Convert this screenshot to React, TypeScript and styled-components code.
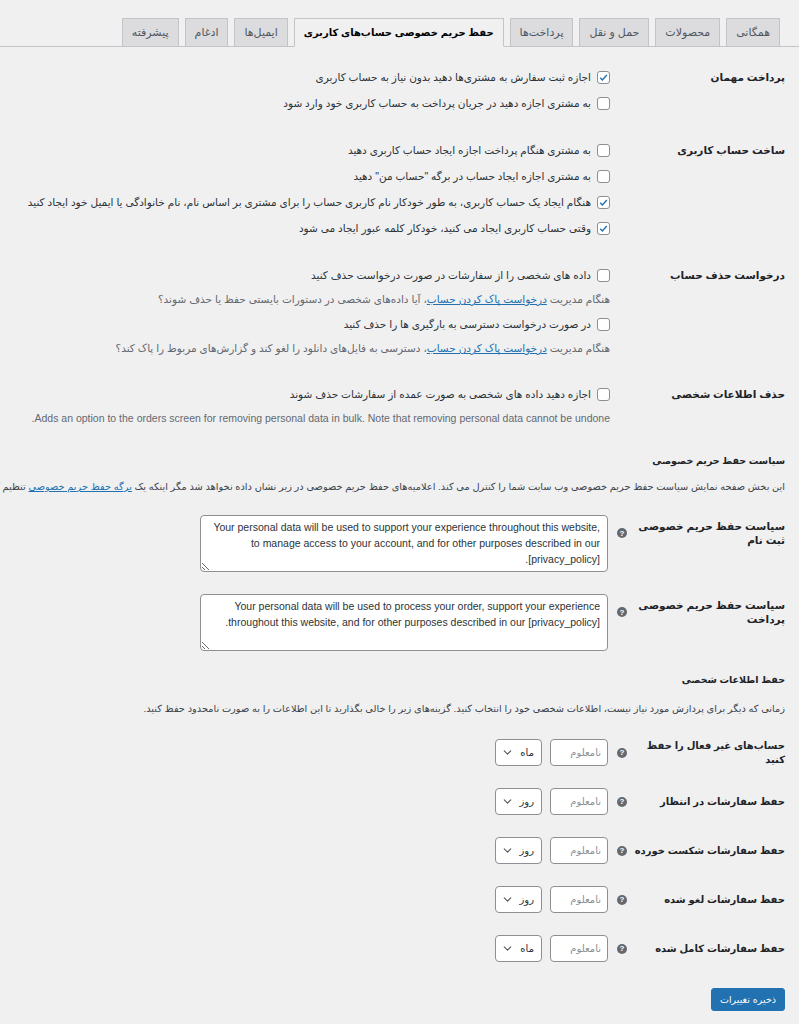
import styled, { createGlobalStyle } from "styled-components";
import { ChevronDown } from "lucide-react";

const GlobalStyle = createGlobalStyle`
  html, body {
    margin: 0;
    background: #f0f0f1;
  }
  body {
    direction: rtl;
    font-family: "Liberation Sans", "DejaVu Sans", sans-serif;
    font-size: 10.5px;
    color: #3c434a;
    overflow-x: hidden;
  }
`;

const tabs = [
  "همگانی",
  "محصولات",
  "حمل و نقل",
  "پرداخت‌ها",
  "حفظ حریم خصوصی حساب‌های کاربری",
  "ایمیل‌ها",
  "ادغام",
  "پیشرفته",
];

const retention = [
  { label: "حساب‌های غیر فعال را حفظ کنید", unit: "ماه" },
  { label: "حفظ سفارشات در انتظار", unit: "روز" },
  { label: "حفظ سفارشات شکست خورده", unit: "روز" },
  { label: "حفظ سفارشات لغو شده", unit: "روز" },
  { label: "حفظ سفارشات کامل شده", unit: "ماه" },
];

const Check = ({ checked, children }: { checked?: boolean; children: React.ReactNode }) => (
  <CheckRow>
    <Box>
      {checked && (
        <svg width="11" height="11" viewBox="0 0 20 20">
          <path d="M4 10.5l4 4 8-9" fill="none" stroke="#2271b1" strokeWidth="2.6" />
        </svg>
      )}
    </Box>
    <span>{children}</span>
  </CheckRow>
);

const HelpTip = () => <Help>?</Help>;

const App = () => {
  return (
    <>
      <GlobalStyle />
      <TabBar>
        {tabs.map((t, i) => (
          <Tab key={t} $active={i === 4}>
            {t}
          </Tab>
        ))}
      </TabBar>
      <Content>
        <Row>
          <Th>پرداخت مهمان</Th>
          <Td>
            <Check checked>اجازه ثبت سفارش به مشتری‌ها دهید بدون نیاز به حساب کاربری</Check>
            <Check>به مشتری اجازه دهید در جریان پرداخت به حساب کاربری خود وارد شود</Check>
          </Td>
        </Row>
        <Row>
          <Th>ساخت حساب کاربری</Th>
          <Td>
            <Check>به مشتری هنگام پرداخت اجازه ایجاد حساب کاربری دهید</Check>
            <Check>به مشتری اجازه ایجاد حساب در برگه "حساب من" دهید</Check>
            <Check checked>
              هنگام ایجاد یک حساب کاربری، به طور خودکار نام کاربری حساب را برای مشتری بر اساس نام، نام خانوادگی یا ایمیل خود ایجاد کنید
            </Check>
            <Check checked>وقتی حساب کاربری ایجاد می کنید، خودکار کلمه عبور ایجاد می شود</Check>
          </Td>
        </Row>
        <Row>
          <Th>درخواست حذف حساب</Th>
          <Td>
            <Check>داده های شخصی را از سفارشات در صورت درخواست حذف کنید</Check>
            <Desc>
              هنگام مدیریت <Link>درخواست پاک کردن حساب</Link>، آیا داده‌های شخصی در دستورات بایستی حفظ یا حذف شوند؟
            </Desc>
            <Check>در صورت درخواست دسترسی به بارگیری ها را حذف کنید</Check>
            <Desc>
              هنگام مدیریت <Link>درخواست پاک کردن حساب</Link>، دسترسی به فایل‌های دانلود را لغو کند و گزارش‌های مربوط را پاک کند؟
            </Desc>
          </Td>
        </Row>
        <Row>
          <Th>حذف اطلاعات شخصی</Th>
          <Td>
            <Check>اجازه دهید داده های شخصی به صورت عمده از سفارشات حذف شوند</Check>
            <Desc>
              Adds an option to the orders screen for removing personal data in bulk. Note that removing personal data cannot be undone.
            </Desc>
          </Td>
        </Row>

        <Heading>سیاست حفظ حریم خصوصی</Heading>
        <Intro $top={9}>
          این بخش صفحه نمایش سیاست حفظ حریم خصوصی وب سایت شما را کنترل می کند. اعلامیه‌های حفظ حریم خصوصی در زیر نشان داده نخواهد شد مگر اینکه یک <Link>برگه حفظ حریم خصوصی</Link> تنظیم کنید.
        </Intro>

        <TextRow>
          <FieldTh>
            <FieldLabel>سیاست حفظ حریم خصوصی ثبت نام</FieldLabel>
            <HelpTip />
          </FieldTh>
          <Td>
            <Area
              readOnly
              value="Your personal data will be used to support your experience throughout this website, to manage access to your account, and for other purposes described in our [privacy_policy]."
            />
          </Td>
        </TextRow>
        <TextRow>
          <FieldTh>
            <FieldLabel>سیاست حفظ حریم خصوصی پرداخت</FieldLabel>
            <HelpTip />
          </FieldTh>
          <Td>
            <Area
              readOnly
              value="Your personal data will be used to process your order, support your experience throughout this website, and for other purposes described in our [privacy_policy]."
            />
          </Td>
        </TextRow>

        <Heading $top={18}>حفظ اطلاعات شخصی</Heading>
        <Intro $top={12}>
          زمانی که دیگر برای پردازش مورد نیاز نیست، اطلاعات شخصی خود را انتخاب کنید. گزینه‌های زیر را خالی بگذارید تا این اطلاعات را به صورت نامحدود حفظ کنید.
        </Intro>

        <Retention>
          {retention.map((r) => (
            <RetentionRow key={r.label}>
              <FieldTh $center>
                <FieldLabel>{r.label}</FieldLabel>
                <HelpTip />
              </FieldTh>
              <Controls>
                <NumberInput placeholder="نامعلوم" />
                <SelectBox>
                  <span>{r.unit}</span>
                  <ChevronDown size={13} strokeWidth={2} color="#50575e" />
                </SelectBox>
              </Controls>
            </RetentionRow>
          ))}
        </Retention>

        <SaveButton>ذخیره تغییرات</SaveButton>
      </Content>
    </>
  );
};

export default App;

const TabBar = styled.nav`
  display: flex;
  gap: 6px;
  padding: 18px 19px 0 0;
  border-bottom: 1px solid #c3c4c7;
`;

const Tab = styled.a<{ $active?: boolean }>`
  display: flex;
  align-items: center;
  height: 27px;
  padding: 0 9px;
  margin-bottom: -1px;
  background: ${(p) => (p.$active ? "#f0f0f1" : "#dcdcde")};
  border: 1px solid #c3c4c7;
  border-bottom-color: ${(p) => (p.$active ? "#f0f0f1" : "#c3c4c7")};
  color: ${(p) => (p.$active ? "#000" : "#50575e")};
  font-size: ${(p) => (p.$active ? "10px" : "11px")};
  font-weight: ${(p) => (p.$active ? "bold" : "normal")};
  white-space: nowrap;
  cursor: pointer;
`;

const Content = styled.main`
  padding: 7px 14px 30px 0;
`;

const Row = styled.div`
  display: flex;
  padding: 10px 0 11px;
`;

const Th = styled.div`
  flex: none;
  width: 173px;
  font-size: 10.5px;
  font-weight: bold;
  line-height: 26px;
  color: #1d2327;
`;

const Td = styled.div`
  flex: 1;
  min-width: 0;
  padding-right: 2px;
`;

const CheckRow = styled.label`
  display: flex;
  align-items: center;
  gap: 6px;
  height: 26px;
  white-space: nowrap;
  color: #2c3338;
`;

const Box = styled.span`
  display: flex;
  align-items: center;
  justify-content: center;
  flex: none;
  width: 11px;
  height: 11px;
  background: #fff;
  border: 1px solid #8c8f94;
  border-radius: 3px;
`;

const Desc = styled.p`
  margin: 0;
  height: 23px;
  line-height: 23px;
  color: #646970;
  white-space: nowrap;
`;

const Link = styled.a`
  color: #2271b1;
  text-decoration: underline;
`;

const Heading = styled.h2<{ $top?: number }>`
  margin: ${(p) => p.$top ?? 12}px 0 0;
  font-size: 9.5px;
  font-weight: bold;
  line-height: 16px;
  color: #1d2327;
`;

const Intro = styled.p<{ $top: number }>`
  margin: ${(p) => p.$top}px 0 0;
  font-size: 9.8px;
  line-height: 18px;
  color: #3c434a;
  white-space: nowrap;
`;

const TextRow = styled.div`
  display: flex;
  padding: 19px 0 3px;
`;

const FieldTh = styled.div<{ $center?: boolean }>`
  flex: none;
  width: 173px;
  display: flex;
  justify-content: space-between;
  align-items: ${(p) => (p.$center ? "center" : "flex-start")};
`;

const FieldLabel = styled.span`
  width: 156px;
  margin-top: 4px;
  font-size: 10.5px;
  font-weight: bold;
  line-height: 14px;
  color: #1d2327;
`;

const Help = styled.span`
  display: flex;
  align-items: center;
  justify-content: center;
  flex: none;
  width: 10px;
  height: 10px;
  margin: 13px 0 0 5px;
  border-radius: 50%;
  background: #646970;
  color: #fff;
  font-size: 8px;
  font-weight: bold;
`;

const Area = styled.textarea`
  display: block;
  box-sizing: border-box;
  width: 408px;
  height: 57px;
  margin-right: 2px;
  padding: 3px 7px;
  border: 1px solid #8c8f94;
  border-radius: 4px;
  background: #fff;
  font-family: "Liberation Sans", sans-serif;
  font-size: 10.5px;
  line-height: 16px;
  color: #2c3338;
  direction: rtl;
  resize: vertical;
`;

const Retention = styled.div`
  margin-top: 10px;
`;

const RetentionRow = styled.div`
  display: flex;
  align-items: center;
  height: 49px;

  ${Help} {
    margin-top: 0;
  }
  ${FieldLabel} {
    margin-top: 0;
    font-size: 10px;
  }
`;

const Controls = styled.div`
  display: flex;
  gap: 8px;
  padding-right: 4px;
`;

const NumberInput = styled.input`
  box-sizing: border-box;
  width: 58px;
  height: 27px;
  padding: 0 6px;
  border: 1px solid #8c8f94;
  border-radius: 4px;
  background: #fff;
  font-family: "DejaVu Sans", sans-serif;
  font-size: 10px;
  direction: rtl;
  &::placeholder {
    color: #8c8f94;
  }
`;

const SelectBox = styled.div`
  box-sizing: border-box;
  display: flex;
  align-items: center;
  justify-content: space-between;
  width: 47px;
  height: 27px;
  padding: 0 7px 0 5px;
  border: 1px solid #8c8f94;
  border-radius: 4px;
  background: #fff;
  font-size: 10px;
  color: #2c3338;
`;

const SaveButton = styled.button`
  display: block;
  margin-top: 15px;
  height: 23px;
  padding: 0 8px;
  border: 1px solid #2271b1;
  border-radius: 3px;
  background: #2271b1;
  color: #fff;
  font-family: "DejaVu Sans", sans-serif;
  font-size: 9.5px;
  cursor: pointer;
`;
